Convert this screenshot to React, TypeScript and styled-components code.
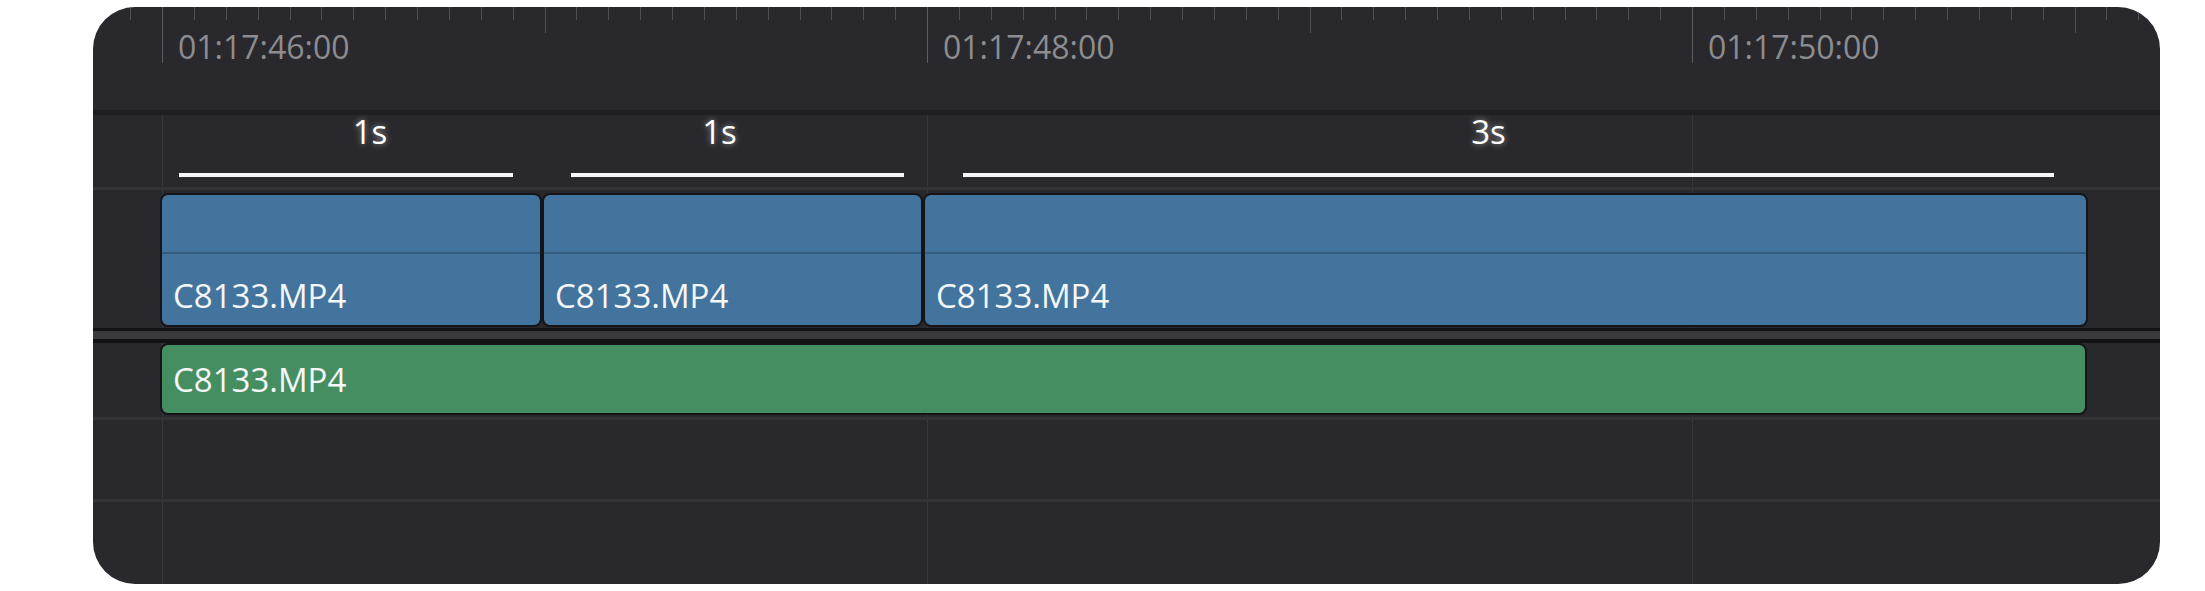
import React from 'react';
import styled, { createGlobalStyle } from 'styled-components';

const SECOND = 382.5;
const ORIGIN = 69;
const PANEL_W = 2067;
const HEADER_W = 67;
const TICK = SECOND / 12;

const GlobalStyle = createGlobalStyle`
  html, body {
    margin: 0;
    background: #ffffff;
  }
  body {
    font-family: "Open Sans", "Noto Sans", sans-serif;
  }
`;

const timecodes = ['01:17:46:00', '01:17:48:00', '01:17:50:00'];

const spans = [
  { label: '1s', gap: 86, width: 334, shift: 24 },
  { label: '1s', gap: 58, width: 333, shift: -18 },
  { label: '3s', gap: 59, width: 1091, shift: -20 },
];

const videoClips = [
  { name: 'C8133.MP4', width: 382 },
  { name: 'C8133.MP4', width: 381 },
  { name: 'C8133.MP4', width: 1165 },
];

const majorLines = [0, 1, 2].map(i => ORIGIN + i * SECOND * 2);

const TickMarks = () => {
  const lines = [];
  for (let k = -2; ORIGIN + k * TICK < PANEL_W; k++) {
    const x = Math.round(ORIGIN + k * TICK) + 0.5;
    const major = k % 24 === 0;
    const second = !major && k % 12 === 0;
    lines.push(
      <line
        key={k}
        x1={x}
        x2={x}
        y1={0}
        y2={major ? 56 : second ? 26 : 13}
        stroke={major ? '#5c5c61' : '#505055'}
        strokeWidth={1}
      />
    );
  }
  return (
    <Styled.Ticks width={PANEL_W} height={56} viewBox={`0 0 ${PANEL_W} 56`}>
      {lines}
    </Styled.Ticks>
  );
};

export default function App() {
  return (
    <>
      <GlobalStyle />
      <Styled.Panel>
        <Styled.Ruler>
          <TickMarks />
          <Styled.TimecodeRow>
            {timecodes.map(tc => (
              <Styled.Timecode key={tc}>{tc}</Styled.Timecode>
            ))}
          </Styled.TimecodeRow>
        </Styled.Ruler>

        <Styled.Tracks>
          <Styled.DurationRow>
            {spans.map((s, i) => (
              <Styled.Span key={i} $gap={s.gap} $width={s.width}>
                <Styled.SpanLabel $shift={s.shift}>{s.label}</Styled.SpanLabel>
                <Styled.SpanBar />
              </Styled.Span>
            ))}
          </Styled.DurationRow>

          <Styled.VideoTrack>
            {videoClips.map((c, i) => (
              <Styled.VideoClip key={i} $width={c.width}>
                <Styled.ClipThumbs />
                <Styled.ClipName>{c.name}</Styled.ClipName>
              </Styled.VideoClip>
            ))}
          </Styled.VideoTrack>

          <Styled.Separator />

          <Styled.AudioTrack>
            <Styled.AudioClip $width={1927}>C8133.MP4</Styled.AudioClip>
          </Styled.AudioTrack>

          <Styled.EmptyRow />
          <Styled.LastRow />
        </Styled.Tracks>
      </Styled.Panel>
    </>
  );
}

const gridLines = majorLines
  .map(x => `linear-gradient(#37373c, #37373c) ${x}px 0 / 1px 100% no-repeat`)
  .join(', ');

const Styled = {
  Panel: styled.div`
    display: flex;
    flex-direction: column;
    width: ${PANEL_W}px;
    height: 577px;
    margin: 7px 0 0 93px;
    background: #28282d;
    border-radius: 42px;
    overflow: hidden;
  `,
  Ruler: styled.div`
    display: grid;
    height: 103px;
    border-bottom: 5px solid #1f1f23;
    & > * {
      grid-area: 1 / 1;
    }
  `,
  Ticks: styled.svg`
    display: block;
  `,
  TimecodeRow: styled.div`
    display: flex;
    padding: 24px 0 0 ${ORIGIN + 16}px;
  `,
  Timecode: styled.div`
    flex: 0 0 ${SECOND * 2}px;
    font-size: 32px;
    line-height: 1;
    color: #8d8d90;
  `,
  Tracks: styled.div`
    flex: 1;
    display: flex;
    flex-direction: column;
    background: ${gridLines};
  `,
  DurationRow: styled.div`
    display: flex;
    height: 72px;
    border-bottom: 3px solid #333338;
  `,
  Span: styled.div<{ $gap: number; $width: number }>`
    display: flex;
    flex-direction: column;
    margin-left: ${p => p.$gap}px;
    width: ${p => p.$width}px;
    padding-top: 1px;
  `,
  SpanLabel: styled.div<{ $shift: number }>`
    font-size: 33px;
    line-height: 32px;
    text-align: center;
    color: #ffffff;
    text-shadow: 0 0 6px rgba(255, 255, 255, 0.55);
    padding-left: ${p => Math.max(0, p.$shift * 2)}px;
    padding-right: ${p => Math.max(0, -p.$shift * 2)}px;
    margin-bottom: 25px;
  `,
  SpanBar: styled.div`
    height: 4px;
    background: #f4f6f8;
  `,
  VideoTrack: styled.div`
    display: flex;
    padding: 3px 0 1px ${HEADER_W}px;
  `,
  VideoClip: styled.div<{ $width: number }>`
    display: flex;
    flex-direction: column;
    box-sizing: border-box;
    width: ${p => p.$width}px;
    height: 134px;
    background: #43749e;
    border: 2px solid #151517;
    border-radius: 8px;
  `,
  ClipThumbs: styled.div`
    height: 57px;
    border-bottom: 2px solid #345c7f;
  `,
  ClipName: styled.div`
    padding: 25px 0 0 11px;
    font-size: 33px;
    line-height: 1;
    color: #f4f6f8;
  `,
  Separator: styled.div`
    height: 8px;
    background: #3a3a3c;
    border-top: 3px solid #121214;
    border-bottom: 4px solid #121214;
  `,
  AudioTrack: styled.div`
    display: flex;
    padding: 0 0 2px ${HEADER_W}px;
    border-bottom: 3px solid #333338;
  `,
  AudioClip: styled.div<{ $width: number }>`
    box-sizing: border-box;
    width: ${p => p.$width}px;
    height: 72px;
    padding: 18px 0 0 11px;
    background: #458e62;
    border: 2px solid #151517;
    border-radius: 8px;
    font-size: 33px;
    line-height: 1;
    color: #f4f6f8;
  `,
  EmptyRow: styled.div`
    height: 79px;
    border-bottom: 3px solid #333338;
  `,
  LastRow: styled.div`
    flex: 1;
  `,
};
